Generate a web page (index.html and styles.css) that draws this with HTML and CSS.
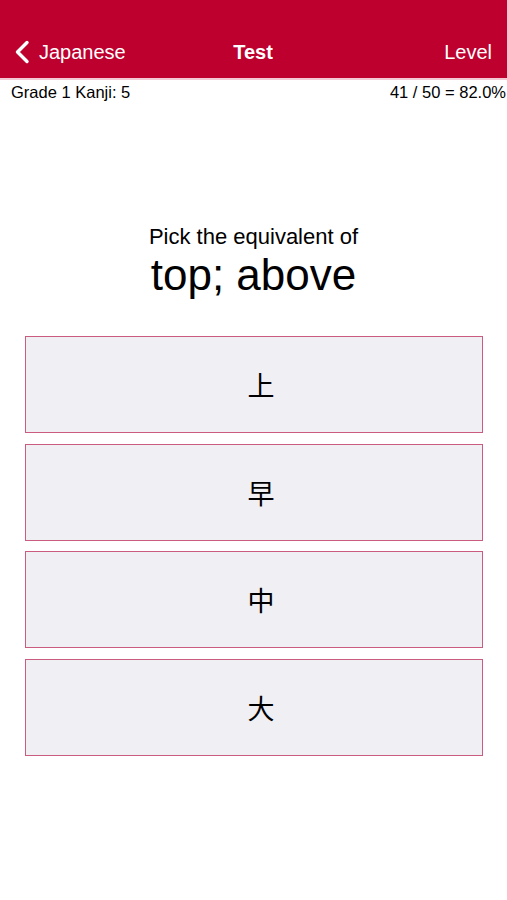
FILE: index.html
```html
<!DOCTYPE html>
<html lang="en">
<head>
    <meta charset="UTF-8">
    <meta name="viewport" content="width=device-width, initial-scale=1.0">
    <title>Test</title>
    <link rel="stylesheet" href="styles.css">
</head>
<body>
    <div class="nav-bar">
        <div class="nav-row">
            <div class="nav-back">
                <svg class="chevron" width="16" height="24" viewBox="0 0 16 24">
                    <path d="M13 2.5 L3.5 12 L13 21.5" fill="none" stroke="#fff" stroke-width="3.4" stroke-linecap="round" stroke-linejoin="round"/>
                </svg>
                <span>Japanese</span>
            </div>
            <div class="nav-title">Test</div>
            <div class="nav-right">Level</div>
        </div>
    </div>
    <div class="status-row">
        <span>Grade 1 Kanji: 5</span>
        <span>41 / 50 = 82.0%</span>
    </div>

    <div class="question">
        <div class="prompt">Pick the equivalent of</div>
        <div class="word">top; above</div>
    </div>

    <div class="choices">
        <button class="choice">上</button>
        <button class="choice">早</button>
        <button class="choice">中</button>
        <button class="choice">大</button>
    </div>
</body>
</html>
```

FILE: styles.css
```css
body {
    margin: 0;
    font-family: "Liberation Sans", Arial, "Noto Sans CJK JP", sans-serif;
    background-color: #ffffff;
    color: #000;
}

.nav-bar {
    background-color: #bd002e; /* Kanji red */
    height: 80px;
    padding-top: 28px;
    box-sizing: border-box;
    border-bottom: 2px solid #f3c9d3;
}

.nav-row {
    display: flex;
    align-items: center;
    justify-content: space-between;
    height: 48px;
    padding: 0 15px 0 14px;
    color: #fff;
    font-size: 20px;
}

.nav-back {
    display: flex;
    align-items: center;
    gap: 9px;
    width: 130px;
}

.chevron {
    display: block;
}

.nav-title {
    font-weight: bold;
}

.nav-right {
    width: 130px;
    text-align: right;
}

.status-row {
    display: flex;
    justify-content: space-between;
    padding: 2px 1px 0 11px;
    font-size: 16.5px;
    line-height: 20px;
}

.question {
    text-align: center;
    margin-top: 122px;
}

.prompt {
    font-size: 22px;
    line-height: 26px;
}

.word {
    font-size: 44px;
    line-height: 50px;
}

.choices {
    display: flex;
    flex-direction: column;
    gap: 10.5px;
    margin: 36px 24px 0 25px;
}

.choice {
    height: 97px;
    background-color: #efeff4;
    border: 1.5px solid #c95c7f;
    font-family: "Noto Sans CJK JP", sans-serif;
    font-size: 27px;
    color: #000;
    padding: 0 0 0 14px;
}
```
